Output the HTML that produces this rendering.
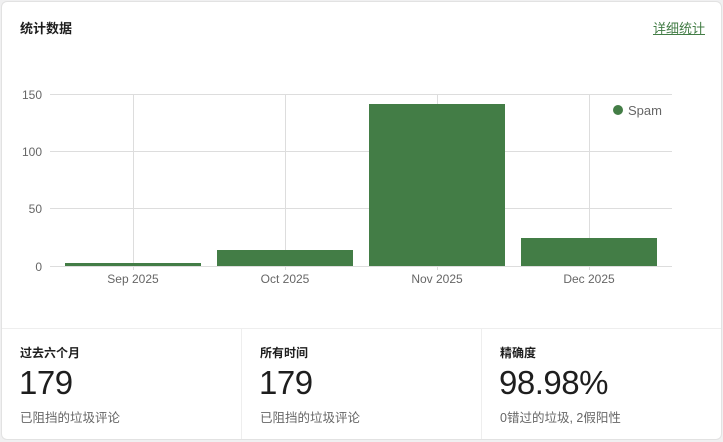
<!DOCTYPE html><html><head><meta charset="utf-8"><style>
body{margin:0;background:#f0f0f1;font-family:"Liberation Sans","Noto Sans CJK SC",sans-serif;width:723px;height:442px;overflow:hidden}
.card{position:absolute;left:1px;top:1px;width:719px;height:437px;background:#fff;border:1px solid #e2e2e2;border-radius:6px;overflow:hidden}
.t{position:absolute;left:18px;top:16px;font-size:13px;font-weight:bold;color:#1e1e1e}
.lk{position:absolute;right:16px;top:16px;font-size:13px;color:#437d46;text-decoration:underline}
.cell{position:absolute;top:326px;height:112px;border-top:1px solid #eee}
.cell b{position:absolute;left:18px;top:15px;font-size:12px;color:#1e1e1e}
.cell .n{position:absolute;left:17px;top:35px;font-size:33px;color:#1e1e1e;letter-spacing:-0.5px}
.cell .s{position:absolute;left:18px;top:78px;font-size:12.5px;color:#666}
</style></head><body><div class="card">
<div class="t">统计数据</div><div class="lk">详细统计</div>
<svg style="position:absolute;left:-2px;top:-2px" width="723" height="330">
<g stroke="#ddd" stroke-width="1">
<line x1="50" y1="94.5" x2="672" y2="94.5"/><line x1="50" y1="151.5" x2="672" y2="151.5"/><line x1="50" y1="208.5" x2="672" y2="208.5"/><line x1="50" y1="266.5" x2="672" y2="266.5"/>
<line x1="133.5" y1="94" x2="133.5" y2="270"/><line x1="285.5" y1="94" x2="285.5" y2="270"/><line x1="437.5" y1="94" x2="437.5" y2="270"/><line x1="589.5" y1="94" x2="589.5" y2="270"/>
</g>
<g fill="#437d46"><rect x="65" y="263" width="136" height="3"/><rect x="217" y="250" width="136" height="16"/><rect x="369" y="104" width="136" height="162"/><rect x="521" y="238" width="136" height="28"/>
<circle cx="618" cy="110" r="5"/></g>
<g font-family="Liberation Sans" font-size="12" fill="#666">
<text x="42" y="99" text-anchor="end">150</text><text x="42" y="156" text-anchor="end">100</text><text x="42" y="213" text-anchor="end">50</text><text x="42" y="271" text-anchor="end">0</text>
<text x="133" y="283" text-anchor="middle">Sep 2025</text><text x="285" y="283" text-anchor="middle">Oct 2025</text><text x="437" y="283" text-anchor="middle">Nov 2025</text><text x="589" y="283" text-anchor="middle">Dec 2025</text>
<text x="628" y="115" font-size="13">Spam</text></g></svg>
<div class="cell" style="left:0;width:239px;border-right:1px solid #eee"><b>过去六个月</b><div class="n">179</div><div class="s">已阻挡的垃圾评论</div></div>
<div class="cell" style="left:240px;width:239px;border-right:1px solid #eee"><b>所有时间</b><div class="n">179</div><div class="s">已阻挡的垃圾评论</div></div>
<div class="cell" style="left:480px;width:240px"><b>精确度</b><div class="n">98.98%</div><div class="s">0错过的垃圾, 2假阳性</div></div>
</div></body></html>
